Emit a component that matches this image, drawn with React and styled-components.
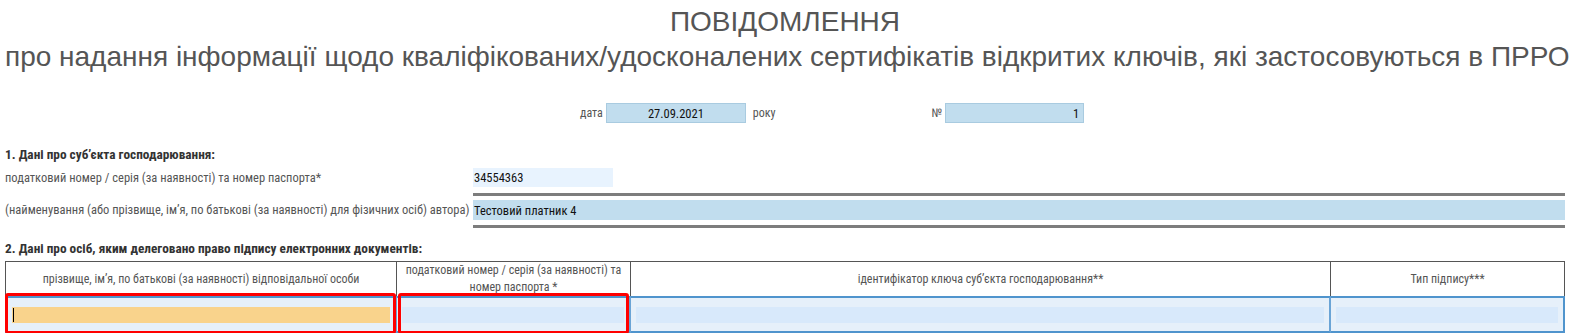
import React from 'react';
import styled, { createGlobalStyle } from 'styled-components';

const GlobalStyle = createGlobalStyle`
  body {
    margin: 0;
    background: #ffffff;
    font-family: "Roboto Condensed", "Liberation Sans", sans-serif;
    color: #555;
  }
`;

const Page = styled.div`
  width: 1560px;
  padding: 4px 20px 0 5px;
`;

const Title = styled.h1`
  margin: 0;
  text-align: center;
  font-family: "Liberation Sans", Arial, sans-serif;
  font-weight: normal;
  font-size: 28px;
  line-height: 36px;
  color: #555;
`;

const Subtitle = styled.h2`
  margin: 0;
  text-align: center;
  font-family: "Liberation Sans", Arial, sans-serif;
  font-weight: normal;
  font-size: 28px;
  line-height: 34px;
  color: #555;
  white-space: nowrap;
`;

const MetaRow = styled.div`
  display: flex;
  align-items: center;
  height: 20px;
  margin-top: 29px;
  padding-left: 575px;
  font-size: 12px;
  color: #555;
`;

const MetaLabel = styled.span`
  margin-right: ${(p) => p.$gap || 3}px;
  margin-left: ${(p) => p.$offset || 0}px;
`;

const MetaInput = styled.input`
  box-sizing: border-box;
  width: ${(p) => p.$width}px;
  height: 20px;
  padding: 0 4px;
  border: 1px solid #a9cbe0;
  background: #c1ddee;
  font-family: "Roboto Condensed", "Liberation Sans", sans-serif;
  font-size: 12.5px;
  color: #111;
  text-align: ${(p) => p.$align || 'center'};
  outline: none;
`;

const SectionHeading = styled.div`
  margin-top: ${(p) => p.$top}px;
  font-weight: bold;
  font-size: 13.3px;
  line-height: 16px;
  color: #333;
`;

const FieldRow = styled.div`
  display: grid;
  grid-template-columns: 468px 1fr;
  align-items: start;
  margin-top: ${(p) => p.$top}px;
`;

const FieldLabel = styled.div`
  font-size: 12.5px;
  line-height: ${(p) => p.$h}px;
  color: #555;
  white-space: nowrap;
`;

const FieldCell = styled.div`
  padding-bottom: ${(p) => p.$pad}px;
  border-bottom: 3px solid #7d7d7d;
`;

const FieldInput = styled.input`
  display: block;
  box-sizing: border-box;
  width: ${(p) => p.$width || '100%'};
  height: ${(p) => p.$h}px;
  padding: 0 1px;
  border: none;
  background: ${(p) => (p.$light ? '#e8f3fe' : '#c1ddee')};
  font-family: "Roboto Condensed", "Liberation Sans", sans-serif;
  font-size: 12.5px;
  color: #111;
  outline: none;
`;

const Table = styled.div`
  margin-top: 4px;
  display: grid;
  grid-template-columns: 391px 234px 700px 1fr;
  border: 1px solid #555;
  border-bottom: none;
`;

const HeadCell = styled.div`
  display: flex;
  align-items: center;
  justify-content: center;
  height: 34px;
  padding: 0 4px;
  text-align: center;
  font-size: 12px;
  line-height: 17px;
  color: #555;
  border-right: ${(p) => (p.$last ? 'none' : '1px solid #555')};
`;

const DataCell = styled.div`
  position: relative;
  height: 33px;
  padding: 0 5px;
  display: flex;
  align-items: center;
  background: #e6f0fa;
  border-top: 2px solid #4f94cd;
  border-bottom: 2px solid #4f94cd;
  border-right: 2px solid ${(p) => (p.$last ? '#4f94cd' : '#6aa4d6')};
  border-left: ${(p) => (p.$first ? '2px solid #4f94cd' : 'none')};
  margin-left: ${(p) => (p.$first ? '-1px' : '0')};
  margin-right: ${(p) => (p.$last ? '-1px' : '0')};
`;

const CellInput = styled.div`
  position: relative;
  flex: 1;
  height: 16px;
  background: ${(p) => (p.$active ? '#f9d38c' : '#d8e9fb')};
`;

const Caret = styled.span`
  position: absolute;
  left: 1px;
  top: 1px;
  width: 1px;
  height: 14px;
  background: #000;
`;

const Highlight = styled.div`
  position: absolute;
  top: -5px;
  bottom: -3px;
  left: ${(p) => p.$l}px;
  right: ${(p) => p.$r}px;
  border: 3px solid #ff0000;
  border-radius: 3px;
  pointer-events: none;
`;

export default function App() {
  return (
    <>
      <GlobalStyle />
      <Page>
        <Title>ПОВІДОМЛЕННЯ</Title>
        <Subtitle>
          про надання інформації щодо кваліфікованих/удосконалених сертифікатів відкритих ключів, які застосовуються в ПРРО
        </Subtitle>

        <MetaRow>
          <MetaLabel>дата</MetaLabel>
          <MetaInput $width={140} value="27.09.2021" readOnly />
          <MetaLabel $offset={7}>року</MetaLabel>
          <MetaLabel $offset={153}>№</MetaLabel>
          <MetaInput $width={139} $align="right" value="1" readOnly />
        </MetaRow>

        <SectionHeading $top={24}>1. Дані про суб’єкта господарювання:</SectionHeading>

        <FieldRow $top={5}>
          <FieldLabel $h={19}>податковий номер / серія (за наявності) та номер паспорта*</FieldLabel>
          <FieldCell $pad={6}>
            <FieldInput $light $width="140px" $h={19} value="34554363" readOnly />
          </FieldCell>
        </FieldRow>

        <FieldRow $top={4}>
          <FieldLabel $h={20}>
            (найменування (або прізвище, ім’я, по батькові (за наявності) для фізичних осіб) автора)
          </FieldLabel>
          <FieldCell $pad={5}>
            <FieldInput $h={20} value="Тестовий платник 4" readOnly />
          </FieldCell>
        </FieldRow>

        <SectionHeading $top={13}>2. Дані про осіб, яким делеговано право підпису електронних документів:</SectionHeading>

        <Table>
          <HeadCell>прізвище, ім’я, по батькові (за наявності) відповідальної особи</HeadCell>
          <HeadCell>податковий номер / серія (за наявності) та номер паспорта *</HeadCell>
          <HeadCell>ідентифікатор ключа суб’єкта господарювання**</HeadCell>
          <HeadCell $last>Тип підпису***</HeadCell>

          <DataCell $first>
            <CellInput $active>
              <Caret />
            </CellInput>
            <Highlight $l={-2} $r={-1} />
          </DataCell>
          <DataCell>
            <CellInput />
            <Highlight $l={1} $r={0} />
          </DataCell>
          <DataCell>
            <CellInput />
          </DataCell>
          <DataCell $last>
            <CellInput />
          </DataCell>
        </Table>
      </Page>
    </>
  );
}
